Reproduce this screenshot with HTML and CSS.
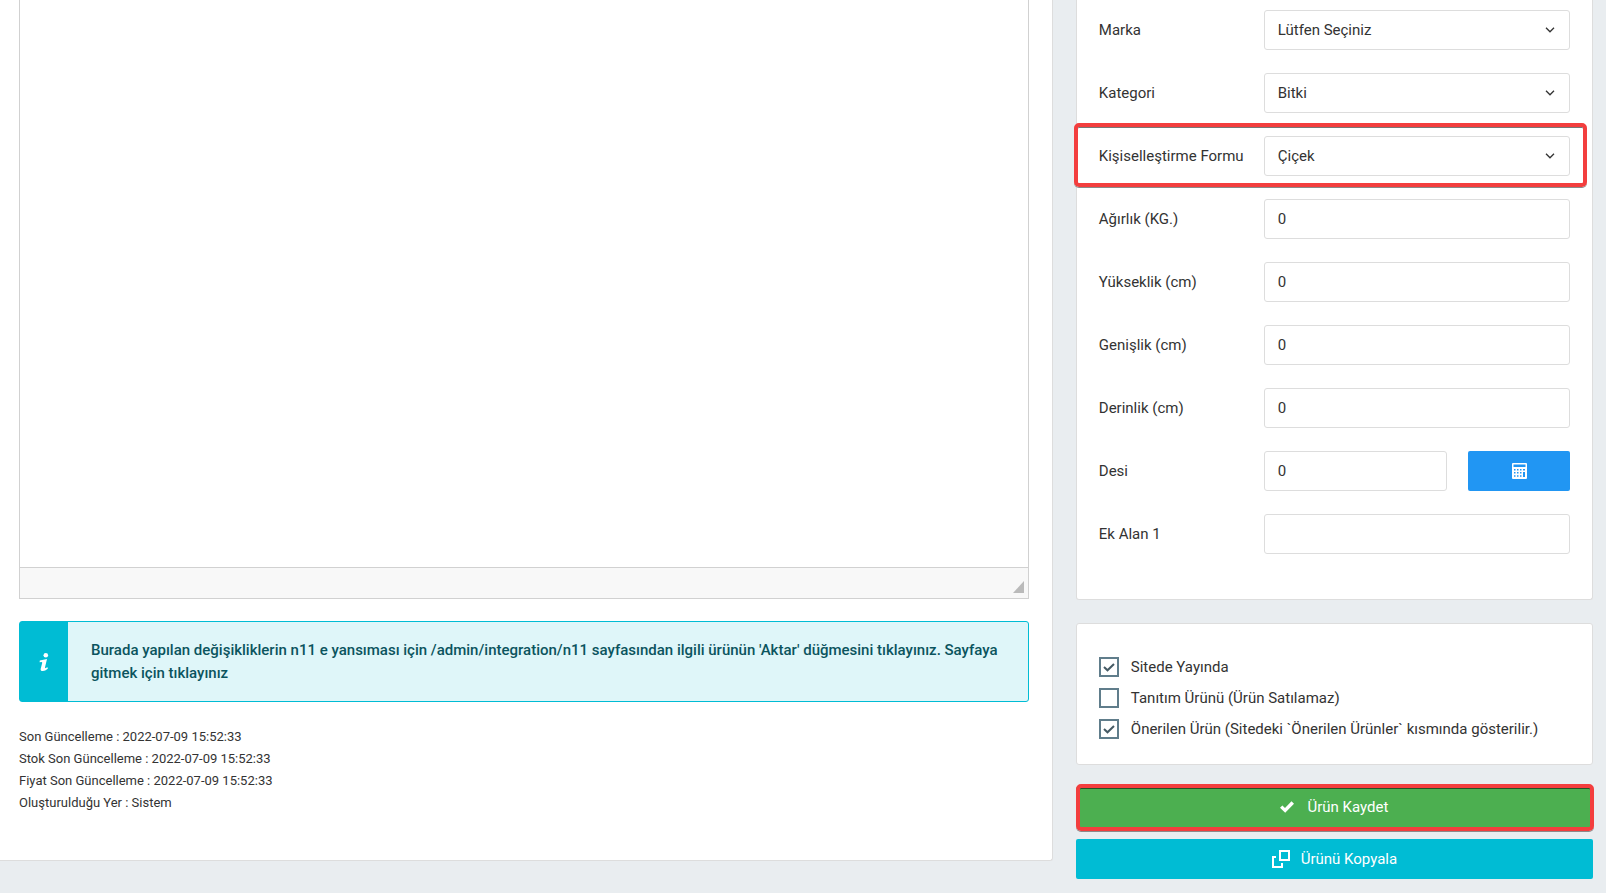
FILE: index.html
```html
<!DOCTYPE html>
<html lang="tr">
<head>
<meta charset="utf-8">
<title>Ürün Düzenle</title>
<link rel="stylesheet" href="styles.css">
</head>
<body>
<form class="page">
  <main class="panel main">
    <div class="editor">
      <textarea class="editor-body" aria-label="Ürün açıklaması"></textarea>
      <div class="editor-footer">
        <svg class="grip" viewBox="0 0 11 12" aria-hidden="true"><path d="M11 0v12H0z"/></svg>
      </div>
    </div>
    <div class="alert">
      <div class="alert-icon">
        <svg width="10" height="18" viewBox="0 0 10 18" aria-hidden="true"><circle cx="6.800" cy="2.300" r="2.300"/><path d="M.8 7.400 8 6 6 14.300q-.2 1 .5.800l2.100-.9.2 1.500Q6.200 18 3.800 18 1.200 18 1.700 15.700L3.200 10Q3.400 9 2.500 9L.6 9.200z"/></svg>
      </div>
      <p class="alert-text">Burada yapılan değişikliklerin n11 e yansıması için /admin/integration/n11 sayfasından ilgili ürünün 'Aktar' düğmesini tıklayınız. Sayfaya gitmek için tıklayınız</p>
    </div>
    <div class="meta">
      <div>Son Güncelleme : 2022-07-09 15:52:33</div>
      <div>Stok Son Güncelleme : 2022-07-09 15:52:33</div>
      <div>Fiyat Son Güncelleme : 2022-07-09 15:52:33</div>
      <div>Oluşturulduğu Yer : Sistem</div>
    </div>
  </main>
  <aside class="side">
    <section class="panel fields">
      <div class="row">
        <label for="marka">Marka</label>
        <div class="select"><select id="marka" class="control"><option>Lütfen Seçiniz</option></select><svg class="chevron" viewBox="0 0 10 6" aria-hidden="true"><path d="M1 .8 5 4.800 9 .8"/></svg></div>
      </div>
      <div class="row">
        <label for="kategori">Kategori</label>
        <div class="select"><select id="kategori" class="control"><option>Bitki</option></select><svg class="chevron" viewBox="0 0 10 6" aria-hidden="true"><path d="M1 .8 5 4.800 9 .8"/></svg></div>
      </div>
      <div class="row row-marked">
        <label for="form">Kişiselleştirme Formu</label>
        <div class="select"><select id="form" class="control"><option>Çiçek</option></select><svg class="chevron" viewBox="0 0 10 6" aria-hidden="true"><path d="M1 .8 5 4.800 9 .8"/></svg></div>
      </div>
      <div class="row"><label for="agirlik">Ağırlık (KG.)</label><input id="agirlik" class="control" type="text" value="0"></div>
      <div class="row"><label for="yukseklik">Yükseklik (cm)</label><input id="yukseklik" class="control" type="text" value="0"></div>
      <div class="row"><label for="genislik">Genişlik (cm)</label><input id="genislik" class="control" type="text" value="0"></div>
      <div class="row"><label for="derinlik">Derinlik (cm)</label><input id="derinlik" class="control" type="text" value="0"></div>
      <div class="row">
        <label for="desi">Desi</label>
        <div class="split">
          <input id="desi" class="control" type="text" value="0">
          <button type="button" class="button button-blue" aria-label="Desi hesapla">
            <svg width="15" height="16" viewBox="0 0 15 16" aria-hidden="true"><path fill-rule="evenodd" d="M1 0h13q1 0 1 1v14q0 1-1 1H1q-1 0-1-1V1Q0 0 1 0zM1.500 1.500V4h12V1.500zM2 6v1.500h1.500V6zm3 0v1.500h1.500V6zm3 0v1.500h1.500V6zm3 0v1.500h2V6zm-9 3v1.500h1.500V9zm3 0v1.500h1.500V9zm3 0v1.500h1.500V9zm3 0v5h2V9zm-9 3.300v1.500h1.500v-1.500zm3 0v1.500h1.500v-1.500zm3 0v1.500h1.500v-1.500z"/></svg>
          </button>
        </div>
      </div>
      <div class="row"><label for="ekalan">Ek Alan 1</label><input id="ekalan" class="control" type="text"></div>
    </section>
    <section class="panel options">
      <label class="check"><input type="checkbox" checked><svg class="tick" viewBox="0 0 12 9" aria-hidden="true"><path d="M1 4 4.500 7.300 11 1"/></svg>Sitede Yayında</label>
      <label class="check"><input type="checkbox"><svg class="tick" viewBox="0 0 12 9" aria-hidden="true"><path d="M1 4 4.500 7.300 11 1"/></svg>Tanıtım Ürünü (Ürün Satılamaz)</label>
      <label class="check"><input type="checkbox" checked><svg class="tick" viewBox="0 0 12 9" aria-hidden="true"><path d="M1 4 4.500 7.300 11 1"/></svg>Önerilen Ürün (Sitedeki `Önerilen Ürünler` kısmında gösterilir.)</label>
    </section>
    <div class="actions">
      <button type="submit" class="button button-green">
        <svg width="14" height="12" viewBox="0 0 14 12" aria-hidden="true"><path d="M0 6.800 2.400 4.500 5 7 11.500.3 14 2.700 5.200 11.700z"/></svg>
        Ürün Kaydet
      </button>
      <button type="button" class="button button-cyan">
        <svg class="copy" width="18" height="18" viewBox="0 0 18 18" aria-hidden="true"><path d="M8 1h9v9H8zM4 7H1v10h9v-4"/></svg>
        Ürünü Kopyala
      </button>
    </div>
  </aside>
</form>
</body>
</html>
```
FILE: styles.css
```css
* { box-sizing: border-box; }

body {
  margin: 0;
  background: #e9edf0;
  color: #333;
  font: 15px/23px Roboto, "Noto Sans", sans-serif;
}

.page {
  display: grid;
  grid-template-columns: 57fr 28fr;
  gap: 23px;
  align-items: start;
  padding-right: 13px;
}

.panel {
  background: #fff;
  border: 1px solid #ddd;
  border-top: 0;
  border-radius: 0 0 3px 3px;
}

.main {
  border-left: 0;
  border-radius: 0 0 3px 0;
  padding: 0 23px 46px 19px;
}

.editor {
  border: 1px solid #d1d1d1;
  border-top: 0;
}

.editor-body {
  display: block;
  width: 100%;
  height: 567px;
  border: 0;
  outline: 0;
  padding: 20px;
  resize: none;
  font: inherit;
}

.editor-footer {
  display: flex;
  justify-content: flex-end;
  align-items: flex-end;
  height: 31px;
  padding: 4px 4px 5px;
  border-top: 1px solid #d1d1d1;
  background: #f8f8f8;
}

.grip { width: 11px; height: 12px; fill: #bababa; }

.alert {
  display: flex;
  margin-top: 22px;
  border: 1px solid #00bcd4;
  border-radius: 3px;
  background: #dff6f9;
  color: #0b545e;
  font-weight: 500;
}

.alert-icon {
  display: flex;
  align-items: center;
  justify-content: center;
  flex: 0 0 48px;
  background: #00bcd4;
  fill: #fff;
}

.alert-text { margin: 0; padding: 17px 23px 16px; }

.meta {
  margin-top: 24px;
  font-size: 13px;
  line-height: 22px;
}

.side { min-width: 0; }

.fields {
  display: grid;
  gap: 23px;
  padding: 10px 22px 45px;
}

.row {
  position: relative;
  display: grid;
  grid-template-columns: 35fr 65fr;
  align-items: center;
}

.row-marked::after,
.button-green::after {
  content: "";
  position: absolute;
  border: 4px solid #f33e3e;
  border-radius: 5px;
  box-shadow: 0 1px 0 #8a8a8a, inset 0 1px 0 #0008;
  pointer-events: none;
}

.row-marked::after { inset: -13px -17px -11px -25px; }

.control {
  display: block;
  width: 100%;
  min-width: 0;
  height: 40px;
  padding: 0 13px;
  border: 1px solid #ddd;
  border-radius: 3px;
  background: #fff;
  color: #333;
  font: inherit;
  appearance: none;
}

.select { position: relative; }

.chevron {
  position: absolute;
  top: 17px;
  right: 15px;
  width: 10px;
  height: 6px;
  fill: none;
  stroke: #333;
  stroke-width: 1.3;
  pointer-events: none;
}

.split {
  display: grid;
  grid-template-columns: 9fr 5fr;
  gap: 21px;
}

.button {
  display: flex;
  align-items: center;
  justify-content: center;
  gap: 13px;
  height: 40px;
  padding: 0 13px;
  border: 0;
  border-radius: 2px;
  color: #fff;
  fill: #fff;
  font: inherit;
}

.button-blue { background: #2196f3; }
.button-green { position: relative; background: #4caf50; }
.button-green::after { inset: -3px -1px -4px 0; }
.button-cyan { background: #00bcd4; gap: 11px; }
.copy { fill: none; stroke: #fff; stroke-width: 2; }

.options {
  display: grid;
  gap: 11px;
  margin-top: 23px;
  padding: 33px 22px 25px;
  border-top: 1px solid #ddd;
  border-radius: 3px;
}

.check {
  position: relative;
  display: flex;
  align-items: center;
  gap: 12px;
  line-height: 20px;
}

.check input {
  flex: none;
  width: 20px;
  height: 20px;
  margin: 0;
  border: 2px solid #607d8b;
  background: #fff;
  appearance: none;
}

.tick {
  position: absolute;
  top: 6px;
  left: 4px;
  width: 12px;
  height: 9px;
  fill: none;
  stroke: #455a64;
  stroke-width: 2;
  visibility: hidden;
}

.check input:checked + .tick { visibility: visible; }

.actions {
  display: grid;
  gap: 12px;
  margin-top: 22px;
}
```
